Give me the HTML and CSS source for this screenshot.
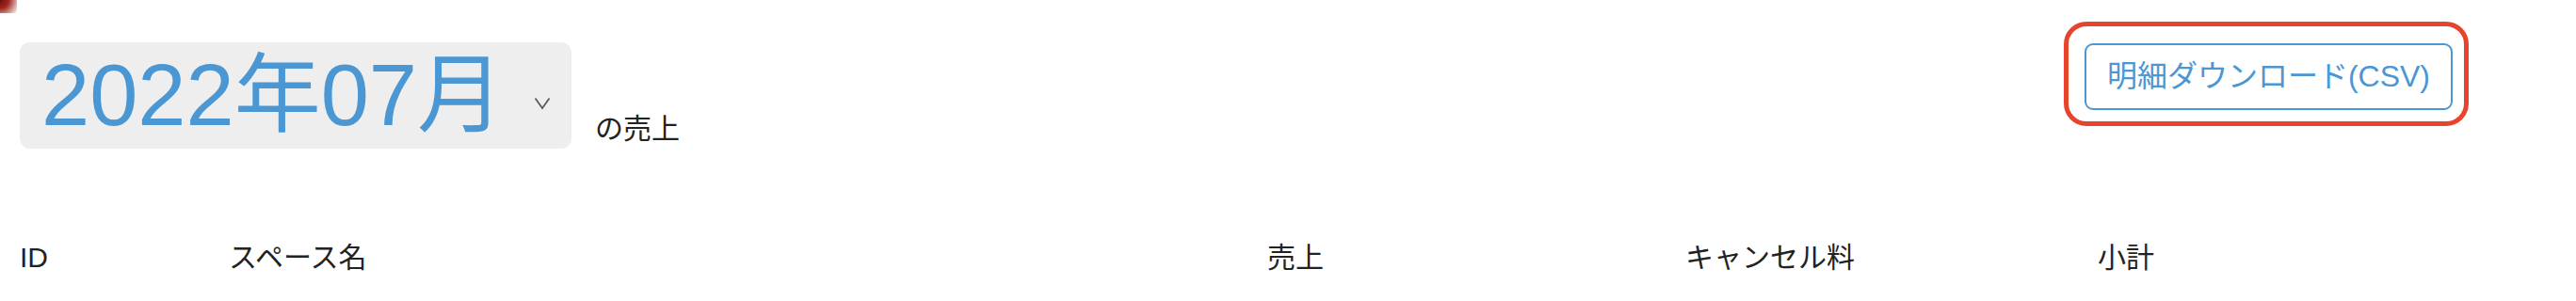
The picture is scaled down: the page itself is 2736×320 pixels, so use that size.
FILE: index.html
```html
<!DOCTYPE html>
<html lang="ja">
<head>
<meta charset="utf-8">
<title>売上</title>
<link rel="stylesheet" href="styles.css">
</head>
<body>
<div class="corner-mark"></div>
<main class="page">
  <section class="top">
    <div class="period">
      <div class="month-select">
        <span class="month-value">2022年07月</span>
        <svg class="chevron" width="18" height="14" viewBox="0 0 18 14" aria-hidden="true">
          <polyline points="1.5,1.5 9,12 16.5,1.5" fill="none" stroke="#5a5a5a" stroke-width="1.8"/>
        </svg>
      </div>
      <span class="period-label">の売上</span>
    </div>
    <div class="highlight">
      <button class="csv-button" type="button">明細ダウンロード(CSV)</button>
    </div>
  </section>
  <div class="table-head">
    <div class="th">ID</div>
    <div class="th">スペース名</div>
    <div class="th">売上</div>
    <div class="th">キャンセル料</div>
    <div class="th">小計</div>
  </div>
</main>
</body>
</html>
```
FILE: styles.css
```css
html, body {
  margin: 0;
  padding: 0;
  background: #ffffff;
}

body {
  font-family: "Liberation Sans", "Noto Sans CJK JP", sans-serif;
  color: #222222;
  position: relative;
  width: 2736px;
  height: 320px;
  overflow: hidden;
}

.corner-mark {
  position: absolute;
  left: 0;
  top: 0;
  width: 18px;
  height: 14px;
  background: radial-gradient(circle at 0 0, #6e1010 0, #a1261f 40%, rgba(200, 80, 70, 0) 100%);
}

.page {
  display: flex;
  flex-direction: column;
}

.top {
  display: flex;
  justify-content: space-between;
  align-items: flex-start;
  padding: 23px 114px 0 21px;
}

.period {
  display: flex;
  align-items: flex-end;
  margin-top: 22px;
}

.month-select {
  display: flex;
  align-items: center;
  box-sizing: border-box;
  width: 586px;
  height: 113px;
  padding: 0 22px 0 23px;
  background: #eeeeee;
  border-radius: 11px;
}

.month-value {
  flex: 1;
  font-size: 92px;
  line-height: 92px;
  color: #4a97d3;
  white-space: nowrap;
  margin-top: -1px;
}

.chevron {
  display: block;
  margin-top: 17px;
}

.period-label {
  font-size: 30px;
  line-height: 36px;
  margin: 0 0 3px 25px;
  white-space: nowrap;
}

.highlight {
  border: 5px solid #e8432c;
  border-radius: 24px;
  padding: 18px 12px 12px 17px;
}

.csv-button {
  display: block;
  margin: 0;
  padding: 14px 22px;
  font-family: "Liberation Sans", "Noto Sans CJK JP", sans-serif;
  font-size: 32px;
  line-height: 39px;
  color: #4a97d3;
  background: #ffffff;
  border: 2px solid #4a97d3;
  border-radius: 9px;
  white-space: nowrap;
}

.table-head {
  display: grid;
  grid-template-columns: 222px 1103px 444px 438px 1fr;
  padding: 0 0 0 21px;
  margin-top: 96px;
}

.th {
  font-size: 30px;
  line-height: 40px;
  white-space: nowrap;
}
```
